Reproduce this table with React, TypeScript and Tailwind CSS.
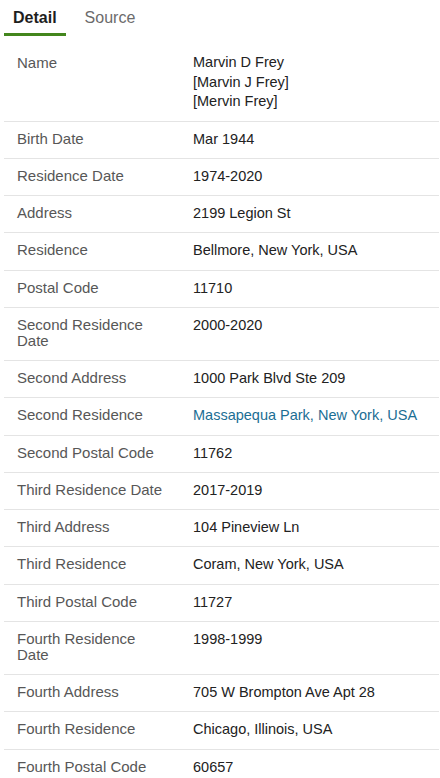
import React from "react";

type Row = { label: string; value: React.ReactNode; link?: boolean };

const rows: Row[] = [
  { label: "Birth Date", value: "Mar 1944" },
  { label: "Residence Date", value: "1974-2020" },
  { label: "Address", value: "2199 Legion St" },
  { label: "Residence", value: "Bellmore, New York, USA" },
  { label: "Postal Code", value: "11710" },
  { label: "Second Residence Date", value: "2000-2020" },
  { label: "Second Address", value: "1000 Park Blvd Ste 209" },
  { label: "Second Residence", value: "Massapequa Park, New York, USA", link: true },
  { label: "Second Postal Code", value: "11762" },
  { label: "Third Residence Date", value: "2017-2019" },
  { label: "Third Address", value: "104 Pineview Ln" },
  { label: "Third Residence", value: "Coram, New York, USA" },
  { label: "Third Postal Code", value: "11727" },
  { label: "Fourth Residence Date", value: "1998-1999" },
  { label: "Fourth Address", value: "705 W Brompton Ave Apt 28" },
  { label: "Fourth Residence", value: "Chicago, Illinois, USA" },
  { label: "Fourth Postal Code", value: "60657" },
];

export default function App() {
  return (
    <div
      className="w-[440px] h-[778px] overflow-hidden bg-white"
      style={{ fontFamily: '"Liberation Sans", Arial, sans-serif' }}
    >
      <div className="flex h-[36px] pl-[4px] gap-[10px]">
        <div className="px-[9px] pt-[8px] border-b-[3px] border-[#43861d] text-[16px] leading-[20px] font-bold text-[#1e1e1e]">
          Detail
        </div>
        <div className="px-[9px] pt-[8px] text-[16px] leading-[20px] text-[#6b6b6b]">
          Source
        </div>
      </div>
      <div className="mt-[7px] ml-[4px] mr-[1px]">
        <div className="grid grid-cols-[148px_1fr] gap-x-[28px] px-[13px] pt-[10px] pb-[9px] border-b border-[#e4e4e4]">
          <div className="text-[15px] leading-[19.5px] text-[#575757]">Name</div>
          <div className="text-[14.5px] leading-[19.5px] text-[#222]">
            <div>Marvin D Frey</div>
            <div>[Marvin J Frey]</div>
            <div>[Mervin Frey]</div>
          </div>
        </div>
        {rows.map((r) => (
          <div
            key={r.label}
            className="grid grid-cols-[148px_1fr] gap-x-[28px] px-[13px] pt-[9px] pb-[11.25px] border-b border-[#e4e4e4]"
          >
            <div className="text-[15px] leading-[16px] text-[#575757]">{r.label}</div>
            <div
              className={
                r.link
                  ? "text-[14.5px] leading-[16px] text-[#1b6e94]"
                  : "text-[14.5px] leading-[16px] text-[#222]"
              }
            >
              {r.value}
            </div>
          </div>
        ))}
      </div>
    </div>
  );
}
